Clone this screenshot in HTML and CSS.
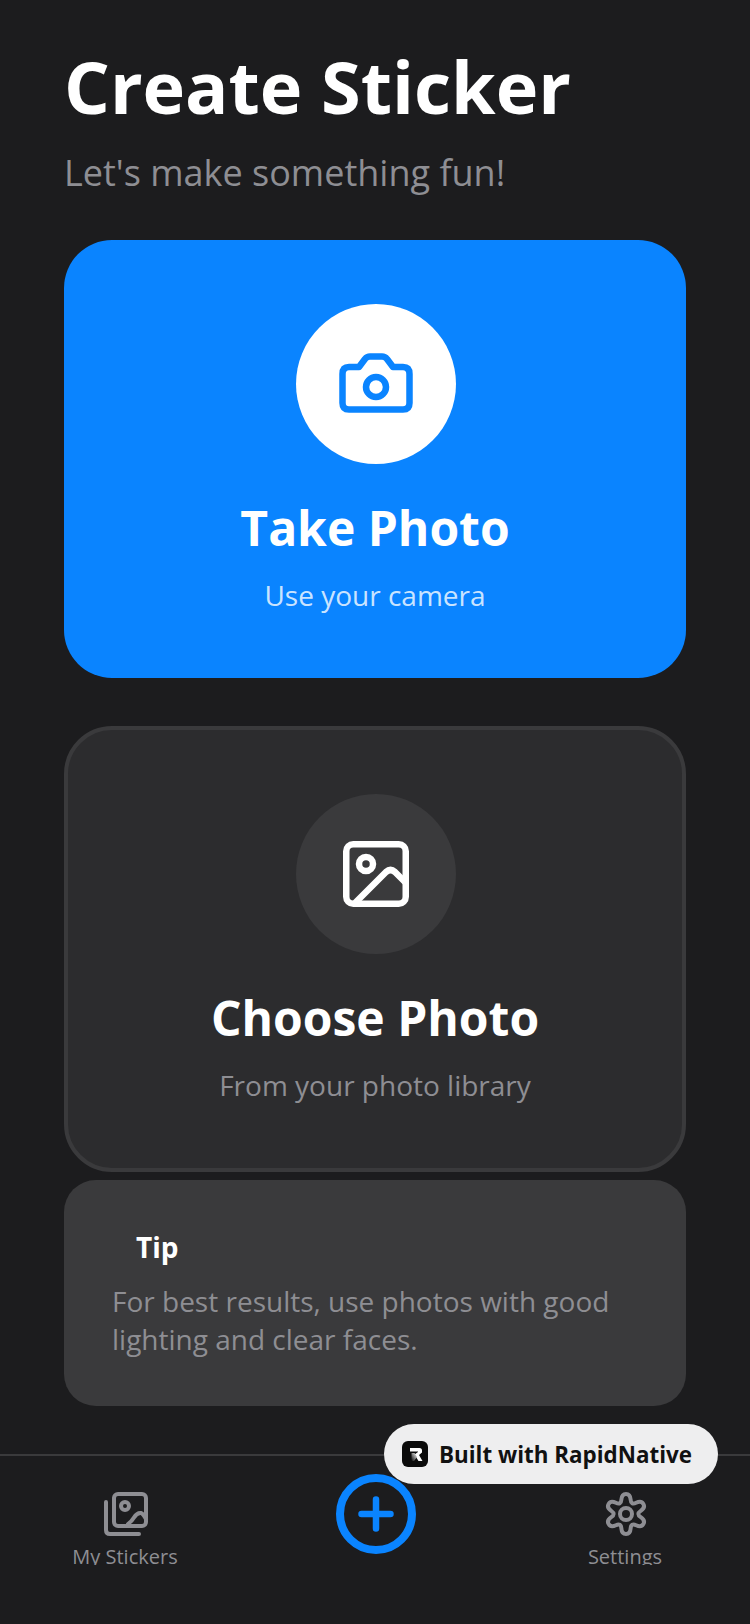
FILE: index.html
```html
<!DOCTYPE html>
<html lang="en">
<head>
    <meta charset="UTF-8">
    <meta name="viewport" content="width=device-width, initial-scale=1.0">
    <title>Create Sticker</title>
    <link rel="stylesheet" href="styles.css">
</head>
<body>

    <div class="screen">
        <main class="content">
            <h1>Create Sticker</h1>
            <p class="subtitle">Let's make something fun!</p>

            <div class="action-card action-card-primary">
                <div class="icon-circle icon-circle-white">
                    <svg class="card-icon" viewBox="0 0 80 80" fill="none" stroke="#0a84ff" stroke-width="6.5" stroke-linejoin="round">
                        <path d="M13 23H23L29 15Q31 12.5 34 12.5H46Q49 12.5 51 15L57 23H67Q73.5 23 73.5 30V59Q73.5 65.5 67 65.5H13Q6.5 65.5 6.5 59V30Q6.5 23 13 23Z"/>
                        <circle cx="40" cy="43" r="10"/>
                    </svg>
                </div>
                <h2>Take Photo</h2>
                <p class="card-sub card-sub-light">Use your camera</p>
            </div>

            <div class="action-card action-card-dark">
                <div class="icon-circle icon-circle-gray">
                    <svg class="card-icon" viewBox="0 0 80 80" fill="none" stroke="#fff" stroke-width="6.5" stroke-linecap="round" stroke-linejoin="round">
                        <rect x="10.25" y="10.25" width="59.5" height="59.5" rx="7"/>
                        <circle cx="30" cy="30" r="7"/>
                        <path d="M20 68L50 38Q54.5 34 59 38L69 48"/>
                    </svg>
                </div>
                <h2>Choose Photo</h2>
                <p class="card-sub">From your photo library</p>
            </div>

            <div class="tip-card">
                <h3>Tip</h3>
                <p>For best results, use photos with good lighting and clear faces.</p>
            </div>
        </main>

        <nav class="tabbar">
            <div class="tab">
                <svg class="tab-icon" viewBox="0 0 48 48" fill="none" stroke="#8e8e93" stroke-width="4" stroke-linecap="round" stroke-linejoin="round">
                    <rect x="12" y="4" width="32" height="32" rx="4"/>
                    <path d="M4 12V40Q4 44 8 44H37"/>
                    <circle cx="23" cy="16" r="4"/>
                    <path d="M26 34Q30 31 32 27.5Q35 22.5 39 23Q41 23.5 44 29"/>
                </svg>
                <span class="tab-label">My Stickers</span>
            </div>
            <div class="tab">
                <div class="add-btn">
                    <svg class="add-icon" viewBox="0 0 36 36" fill="none" stroke="#0a84ff" stroke-width="6.5" stroke-linecap="round">
                        <path d="M18 3.5V32.5M3.5 18H32.5"/>
                    </svg>
                </div>
            </div>
            <div class="tab">
                <svg class="tab-icon" viewBox="-24 -24 48 48" fill="none" stroke="#8e8e93" stroke-width="4" stroke-linejoin="round">
                    <path d="M0 -20.05Q4.26 -20.05 4.63 -14.36Q5 -8.66 10.1 -11.19Q15.23 -13.72 17.37 -10.03Q19.5 -6.33 14.75 -3.17Q10 0 14.75 3.17Q19.5 6.33 17.37 10.03Q15.23 13.72 10.1 11.19Q5 8.66 4.63 14.36Q4.26 20.05 0 20.05Q-4.26 20.05 -4.63 14.36Q-5 8.66 -10.1 11.19Q-15.23 13.72 -17.37 10.03Q-19.5 6.33 -14.75 3.17Q-10 0 -14.75 -3.17Q-19.5 -6.33 -17.37 -10.03Q-15.23 -13.72 -10.1 -11.19Q-5 -8.66 -4.63 -14.36Q-4.26 -20.05 0 -20.05Z"/>
                    <circle cx="0" cy="0" r="6"/>
                </svg>
                <span class="tab-label">Settings</span>
            </div>
        </nav>

        <div class="built-badge">
            <svg class="built-logo" viewBox="0 0 26 26">
                <defs>
                    <linearGradient id="logoFade" x1="1" y1="0" x2="0" y2="1">
                        <stop offset="0" stop-color="#fff"/>
                        <stop offset="1" stop-color="#0b0b0b"/>
                    </linearGradient>
                </defs>
                <rect width="26" height="26" rx="6" fill="#0b0b0b"/>
                <path d="M8 7H17.5Q20 7 20 9.5V11.5L17 14L20.5 20H16.5L12.5 13.5L16 11V10.5H8Z" fill="#fff"/>
                <path d="M9.5 12H12.5L15 16L12 20H9.5Z" fill="url(#logoFade)"/>
            </svg>
            <span>Built with RapidNative</span>
        </div>
    </div>

</body>
</html>
```

FILE: styles.css
```css
* {
    margin: 0;
    padding: 0;
    box-sizing: border-box;
}

body {
    font-family: "Open Sans", "Liberation Sans", sans-serif;
    background-color: #1c1c1e;
    color: #fff;
}

.screen {
    position: relative;
    display: flex;
    flex-direction: column;
    height: 1624px;
    overflow: hidden;
}

.content {
    flex: 1;
    padding: 40px 64px 0;
}

h1 {
    font-size: 72px;
    line-height: 92px;
    font-weight: 700;
}

.subtitle {
    margin-top: 19px;
    font-size: 36px;
    line-height: 44px;
    color: #8e8e93;
}

.action-card {
    display: flex;
    flex-direction: column;
    align-items: center;
    border-radius: 48px;
}

.action-card h2 {
    margin-top: 32px;
    font-size: 48px;
    line-height: 64px;
    font-weight: 700;
}

.action-card-primary {
    height: 438px;
    margin-top: 45px;
    padding-top: 64px;
    background-color: #0a84ff;
}

.action-card-dark {
    height: 446px;
    margin-top: 48px;
    padding-top: 64px;
    background-color: #2c2c2e;
    border: 4px solid #3a3a3c;
}

.icon-circle {
    display: flex;
    align-items: center;
    justify-content: center;
    width: 160px;
    height: 160px;
    margin-left: 2px;
    border-radius: 50%;
}

.icon-circle-white {
    background-color: #fff;
}

.icon-circle-gray {
    background-color: #3a3a3c;
}

.card-icon {
    width: 80px;
    height: 80px;
}

.card-sub {
    margin-top: 15px;
    font-size: 28px;
    line-height: 40px;
    color: #8e8e93;
}

.card-sub-light {
    color: rgba(255, 255, 255, 0.8);
}

.tip-card {
    height: 226px;
    margin-top: 8px;
    padding: 48px;
    background-color: #3a3a3c;
    border-radius: 32px;
}

.tip-card h3 {
    margin-left: 24px;
    font-size: 28px;
    line-height: 38px;
    font-weight: 700;
}

.tip-card p {
    margin-top: 16px;
    font-size: 28px;
    line-height: 38px;
    color: #8e8e93;
}

.tabbar {
    display: flex;
    height: 170px;
    padding-top: 34px;
    background-color: #1c1c1e;
    border-top: 2px solid #3a3a3c;
}

.tab {
    display: flex;
    flex-direction: column;
    align-items: center;
    width: 250px;
}

.tab-icon {
    width: 48px;
    height: 48px;
    margin-left: 2px;
}

/* o texto corta embaixo de proposito, como na barra original */
.tab-label {
    height: 26px;
    margin-top: 1px;
    overflow: hidden;
    font-size: 20px;
    line-height: 36px;
    color: #8e8e93;
}

.add-btn {
    display: flex;
    align-items: center;
    justify-content: center;
    width: 80px;
    height: 80px;
    margin-top: -16px;
    margin-left: 2px;
    border: 8px solid #0a84ff;
    border-radius: 50%;
}

.add-icon {
    width: 36px;
    height: 36px;
}

/* selo por cima da barra */
.built-badge {
    position: absolute;
    left: 384px;
    top: 1424px;
    display: flex;
    align-items: center;
    gap: 11px;
    width: 334px;
    height: 60px;
    padding-left: 18px;
    background-color: #eeeeef;
    border-radius: 30px;
    color: #111;
    font-size: 22.4px;
    font-weight: 700;
}

.built-logo {
    width: 26px;
    height: 26px;
}
```
